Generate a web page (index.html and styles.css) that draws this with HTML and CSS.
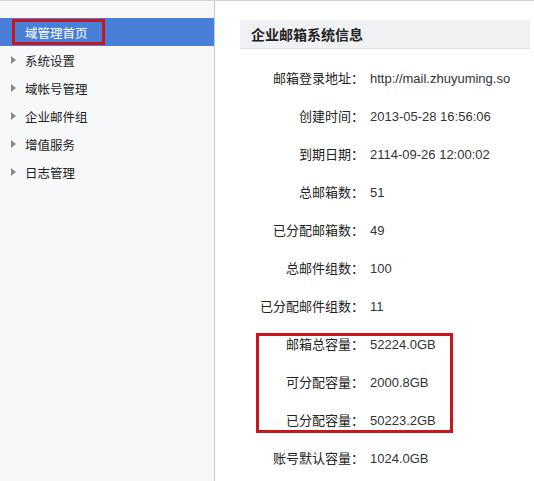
FILE: index.html
```html
<!DOCTYPE html>
<html lang="zh-CN">
<head>
<meta charset="utf-8">
<title>企业邮箱系统信息</title>
<link rel="stylesheet" href="styles.css">
</head>
<body>
<div class="page">
  <aside class="sidebar">
    <ul class="menu">
      <li class="menu-item active"><span class="label">域管理首页</span></li>
      <li class="menu-item"><span class="arrow"></span><span class="label">系统设置</span></li>
      <li class="menu-item"><span class="arrow"></span><span class="label">域帐号管理</span></li>
      <li class="menu-item"><span class="arrow"></span><span class="label">企业邮件组</span></li>
      <li class="menu-item"><span class="arrow"></span><span class="label">增值服务</span></li>
      <li class="menu-item"><span class="arrow"></span><span class="label">日志管理</span></li>
    </ul>
  </aside>
  <main class="main">
    <h2 class="panel-title">企业邮箱系统信息</h2>
    <div class="info">
      <div class="row"><span class="k">邮箱登录地址<span class="colon">：</span></span><span class="v">http://mail.zhuyuming.so</span></div>
      <div class="row"><span class="k">创建时间<span class="colon">：</span></span><span class="v">2013-05-28 16:56:06</span></div>
      <div class="row"><span class="k">到期日期<span class="colon">：</span></span><span class="v">2114-09-26 12:00:02</span></div>
      <div class="row"><span class="k">总邮箱数<span class="colon">：</span></span><span class="v">51</span></div>
      <div class="row"><span class="k">已分配邮箱数<span class="colon">：</span></span><span class="v">49</span></div>
      <div class="row"><span class="k">总邮件组数<span class="colon">：</span></span><span class="v">100</span></div>
      <div class="row"><span class="k">已分配邮件组数<span class="colon">：</span></span><span class="v">11</span></div>
      <div class="group highlight">
        <div class="row"><span class="k">邮箱总容量<span class="colon">：</span></span><span class="v">52224.0GB</span></div>
        <div class="row"><span class="k">可分配容量<span class="colon">：</span></span><span class="v">2000.8GB</span></div>
        <div class="row"><span class="k">已分配容量<span class="colon">：</span></span><span class="v">50223.2GB</span></div>
      </div>
      <div class="row"><span class="k">账号默认容量<span class="colon">：</span></span><span class="v">1024.0GB</span></div>
    </div>
  </main>
</div>
</body>
</html>
```

FILE: styles.css
```css
*, *::before, *::after { box-sizing: border-box; }
html, body {
  margin: 0;
  padding: 0;
  background: #fff;
  font-family: "Liberation Sans", "Noto Sans CJK SC", sans-serif;
  color: #333;
}
.page {
  display: flex;
  height: 481px;
  border-top: 1px solid #d4d4d4;
  overflow: hidden;
}
.sidebar {
  width: 215px;
  flex: none;
  background: #f7f8fa;
  border-right: 1px solid #c9c9c9;
}
.menu {
  list-style: none;
  margin: 0;
  padding: 17px 0 0 0;
}
.menu-item {
  position: relative;
  display: flex;
  align-items: center;
  height: 28px;
  padding-left: 11px;
  font-family: "Noto Sans CJK SC", sans-serif;
  font-size: 12.5px;
  color: #222;
}
.menu-item .arrow {
  width: 0;
  height: 0;
  border-left: 5px solid #8a8a8a;
  border-top: 4px solid transparent;
  border-bottom: 4px solid transparent;
  margin-right: 9px;
}
.menu-item.active {
  background: #4a7fd9;
  color: #fff;
  padding-left: 25px;
}
.menu-item.active::after {
  content: "";
  position: absolute;
  left: 12px;
  top: 1px;
  width: 93px;
  height: 26px;
  border: 3px solid #c8161e;
}
.main {
  flex: 1;
  padding: 19px 4px 0 25px;
}
.panel-title {
  margin: 0;
  height: 29px;
  line-height: 28px;
  padding-left: 11px;
  background: #f0f1f3;
  border-bottom: 1px solid #e2e3e5;
  font-family: "Noto Sans CJK SC", sans-serif;
  font-size: 14px;
  font-weight: bold;
  color: #222;
}
.info {
  margin-top: 10px;
}
.row {
  display: grid;
  grid-template-columns: 124px 1fr;
  column-gap: 6px;
  height: 38px;
  line-height: 38px;
  align-items: baseline;
}
.k {
  text-align: right;
  font-family: "Noto Sans CJK SC", sans-serif;
  font-size: 13px;
  color: #222;
  white-space: nowrap;
}
.colon {
  font-family: "Noto Sans CJK TC", "Noto Sans CJK SC", sans-serif;
}
.v {
  font-family: "Liberation Sans", sans-serif;
  font-size: 13px;
  color: #333;
  white-space: nowrap;
}
.group {
  position: relative;
}
.highlight::after {
  content: "";
  position: absolute;
  left: 16px;
  top: 8px;
  width: 197px;
  height: 100px;
  border: 3px solid #c8161e;
}
```
